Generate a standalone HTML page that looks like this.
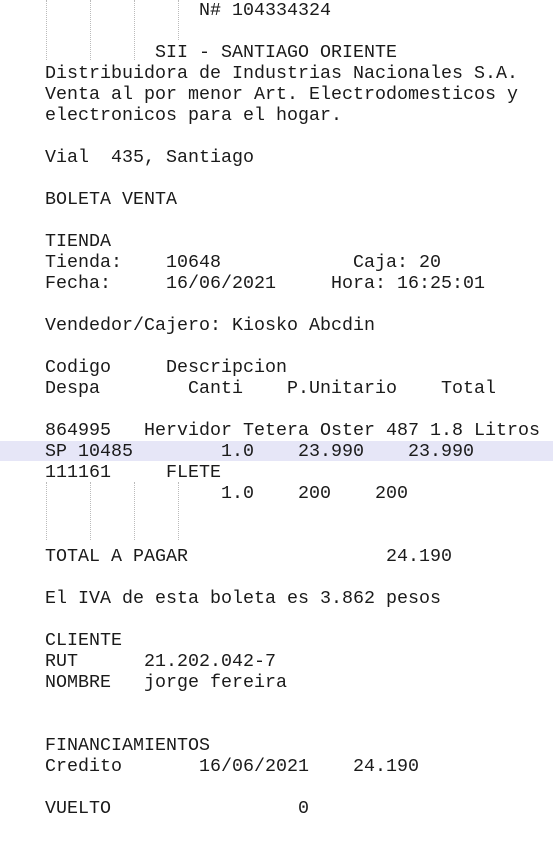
<!DOCTYPE html>
<html><head><meta charset="utf-8"><style>
html,body{margin:0;padding:0;background:#fff;width:553px;height:843px;overflow:hidden;position:relative}
pre{position:absolute;left:45px;top:0;margin:0;font-family:"Liberation Mono",monospace;font-size:18.33px;line-height:21px;color:#1a1a1a;}
.hl{position:absolute;left:0;top:441px;width:553px;height:20px;background:#e6e6f7}
.d{position:absolute;width:0;border-left:1px dotted #bbb}
</style></head><body>
<div class="hl"></div>
<div class="d" style="left:46px;top:0;height:60px"></div>
<div class="d" style="left:90px;top:0;height:60px"></div>
<div class="d" style="left:134px;top:0;height:60px"></div>
<div class="d" style="left:178px;top:0;height:40px"></div>
<div class="d" style="left:46px;top:482px;height:58px"></div>
<div class="d" style="left:90px;top:482px;height:58px"></div>
<div class="d" style="left:134px;top:482px;height:58px"></div>
<div class="d" style="left:178px;top:482px;height:58px"></div>
<pre>              N# 104334324

          SII - SANTIAGO ORIENTE
Distribuidora de Industrias Nacionales S.A.
Venta al por menor Art. Electrodomesticos y
electronicos para el hogar.

Vial  435, Santiago

BOLETA VENTA

TIENDA
Tienda:    10648            Caja: 20
Fecha:     16/06/2021     Hora: 16:25:01

Vendedor/Cajero: Kiosko Abcdin

Codigo     Descripcion
Despa        Canti    P.Unitario    Total

864995   Hervidor Tetera Oster 487 1.8 Litros
SP 10485        1.0    23.990    23.990
111161     FLETE
                1.0    200    200


TOTAL A PAGAR                  24.190

El IVA de esta boleta es 3.862 pesos

CLIENTE
RUT      21.202.042-7
NOMBRE   jorge fereira


FINANCIAMIENTOS
Credito       16/06/2021    24.190

VUELTO                 0</pre>
</body></html>
